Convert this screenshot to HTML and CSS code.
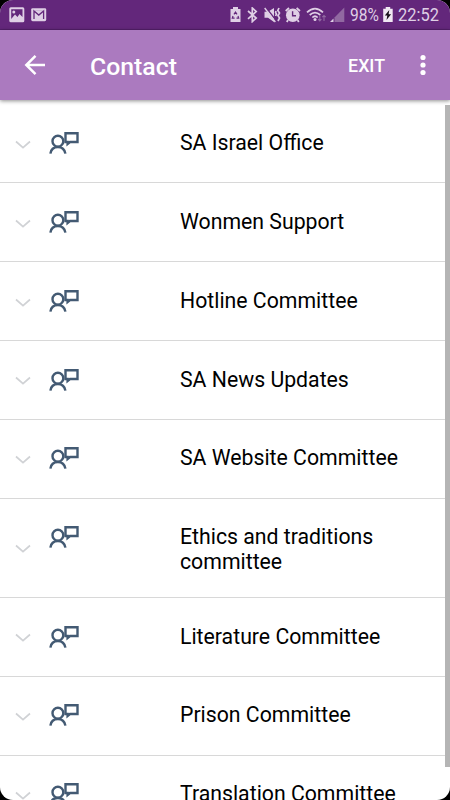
FILE: index.html
```html
<!DOCTYPE html>
<html lang="en">
<head>
<meta charset="utf-8">
<title>Contact</title>
<link rel="stylesheet" href="styles.css">
</head>
<body>
<svg class="symbols" width="0" height="0">
  <symbol id="chevron" viewBox="0 0 16 10"><path d="M1 1.5 8 7.7 15 1.5" fill="none" stroke="#d0d2d5" stroke-width="1.7"/></symbol>
  <symbol id="person" viewBox="0 0 30 24">
    <g fill="none" stroke="#435a73" stroke-width="2.4">
      <circle cx="8.9" cy="10.2" r="5.4"/>
      <path d="M1.4 22.6C2 18.2 4.7 16 8.9 16S15.6 18.2 16.4 22.6"/>
      <path d="M16.5 2.2H28.5V11H21L18.6 13V11H16.5Z"/>
    </g>
  </symbol>
</svg>
<div class="screen">
  <header class="status">
    <div class="notices">
      <svg width="16" height="16" viewBox="0 0 16 16"><rect x=".3" y=".3" width="15" height="15" rx="1.5" fill="#dfcfe5"/><path d="M2.2 2.2H13.5V10L10.5 7 8.5 10 6 7.5 2.2 12Z" fill="#63277b"/><circle cx="4.8" cy="5" r="1.5" fill="#dfcfe5"/></svg>
      <svg width="16" height="16" viewBox="0 0 16 16"><rect x=".2" y="1.2" width="15" height="13" rx="1.4" fill="#dfcfe5"/><path d="M3 12V4L7.8 8.1 12.6 4V12" fill="none" stroke="#63277b" stroke-width="1.3"/><path d="M3 3.6H12.6" stroke="#b99bc4" stroke-width=".5"/></svg>
    </div>
    <div class="indicators">
      <svg width="11" height="16" viewBox="0 0 11 16"><path d="M3 0H8V2H10.5V15H.5V2H3Z" fill="#dfcfe5"/><path d="M4 7.3 5.5 5 7 7.3M8 9 8.7 11.2H6.5M4.6 11.2H2.3L3 9" fill="none" stroke="#63277b" stroke-width="1.2"/></svg>
      <svg class="bluetooth" width="11" height="16" viewBox="0 0 11 16"><path d="M1 4 9.2 11 5.3 14.6V1L9.2 4.6 1 11.8" fill="none" stroke="#dfcfe5" stroke-width="1.7"/></svg>
      <svg class="mute" width="17" height="16" viewBox="0 0 17 16"><path d="M.5 4.8H4L10 1V15L4 10.8H.5Z" fill="#dfcfe5"/><path d="M2 .6 12.4 13.8" stroke="#63277b" stroke-width="1.5"/><path d="M.7 1 11.3 15" stroke="#dfcfe5" stroke-width="1.4"/><path d="M15 1 13.8 3.5 15.5 6 14 8.5 15.5 11 14 14M12 4 11.6 5.5 12.4 7 11.6 9" fill="none" stroke="#dfcfe5" stroke-width="1.7"/></svg>
      <svg class="alarm" width="16" height="16" viewBox="0 0 16 16"><circle cx="7.8" cy="8.2" r="6.8" fill="#dfcfe5"/><path d="M.7 4 4 1M11.6 1 15 4M3 13 1.8 15M12.6 13 13.8 15" stroke="#dfcfe5" stroke-width="1.8"/><path d="M7.6 4.3V8.8H11" fill="none" stroke="#63277b" stroke-width="1.4"/></svg>
      <svg class="wifi" width="21" height="16" viewBox="0 0 21 16"><g fill="none" stroke="#dfcfe5" stroke-width="1.7"><path d="M1 5.4Q9 -2.3 17 5.4M3.7 8Q9 3.2 14.3 8M6.3 10.5Q9 8 11.7 10.5"/></g><circle cx="9" cy="12.5" r="1.5" fill="#dfcfe5"/><path d="M13.8 8.5V14M12.2 12.2 13.8 14 15.4 12.2M18 14V8.5M16.3 10.2 18 8.5 19.7 10.2" fill="none" stroke="#9168a1" stroke-width="1.1"/></svg>
      <svg class="signal" width="15" height="16" viewBox="0 0 15 16"><path d="M14.3 .5V15H4.5V10.5Z" fill="#9168a1"/><path d="M0 15 3.5 11.5V15Z" fill="#dfcfe5"/></svg>
      <span class="percent">98%</span>
      <svg class="charging" width="10" height="16" viewBox="0 0 10 16"><path d="M2.7 0H7.2V1.7H9.7V15H.2V1.7H2.7Z" fill="#f0e8f3"/><path d="M6.3 3 1.8 8.5H4.3L3.5 13 8.1 7.2H5.6Z" fill="#171019"/></svg>
      <span class="clock">22:52</span>
    </div>
  </header>
  <nav class="toolbar">
    <svg class="back" width="22" height="22" viewBox="0 0 22 22"><path d="M21 11H2.5M11.5 1.8 2.3 11 11.5 20.2" fill="none" stroke="#fff" stroke-width="2.5"/></svg>
    <h1>Contact</h1>
    <span class="exit">EXIT</span>
    <svg class="more" width="6" height="22" viewBox="0 0 6 22"><g fill="#fff"><circle cx="3" cy="3.5" r="2.6"/><circle cx="3" cy="11" r="2.6"/><circle cx="3" cy="18.5" r="2.6"/></g></svg>
  </nav>
  <main class="list">
    <div class="row"><svg class="chevron"><use href="#chevron"/></svg><svg class="person"><use href="#person"/></svg><p>SA Israel Office</p></div>
    <div class="row"><svg class="chevron"><use href="#chevron"/></svg><svg class="person"><use href="#person"/></svg><p>Wonmen Support</p></div>
    <div class="row"><svg class="chevron"><use href="#chevron"/></svg><svg class="person"><use href="#person"/></svg><p>Hotline Committee</p></div>
    <div class="row"><svg class="chevron"><use href="#chevron"/></svg><svg class="person"><use href="#person"/></svg><p>SA News Updates</p></div>
    <div class="row"><svg class="chevron"><use href="#chevron"/></svg><svg class="person"><use href="#person"/></svg><p>SA Website Committee</p></div>
    <div class="row tall"><svg class="chevron"><use href="#chevron"/></svg><svg class="person"><use href="#person"/></svg><p>Ethics and traditions committee</p></div>
    <div class="row"><svg class="chevron"><use href="#chevron"/></svg><svg class="person"><use href="#person"/></svg><p>Literature Committee</p></div>
    <div class="row"><svg class="chevron"><use href="#chevron"/></svg><svg class="person"><use href="#person"/></svg><p>Prison Committee</p></div>
    <div class="row"><svg class="chevron"><use href="#chevron"/></svg><svg class="person"><use href="#person"/></svg><p>Translation Committee</p></div>
  </main>
  <div class="scrollbar"></div>
</div>
</body>
</html>
```
FILE: styles.css
```css
* { box-sizing: border-box; }
body { margin: 0; background: #000; font-family: Roboto, sans-serif; overflow: hidden; }
svg { display: block; flex: none; }
.symbols { position: absolute; }
.screen {
  position: relative;
  width: 450px;
  height: 800px;
  overflow: hidden;
  background: #fff;
  border-radius: 13px;
}
.status {
  display: flex;
  justify-content: space-between;
  height: 30px;
  padding: 7px 10px 0 9px;
  background: #63277b;
  border-bottom: 1px solid #55206c;
}
.notices { display: flex; gap: 6px; }
.indicators { display: flex; width: 210px; color: #dfcfe5; font-size: 18.5px; line-height: 17px; }
.bluetooth { margin-left: 6px; }
.mute { margin-left: 6px; }
.alarm { margin-left: 4px; }
.wifi { margin-left: 5px; }
.signal { margin-left: 3px; }
.percent { width: 30px; margin-left: 5px; transform: scaleX(.84); transform-origin: left; }
.charging { margin-left: 3px; }
.clock { margin-left: 5px; transform: scaleX(.89); transform-origin: left; }
.toolbar {
  position: relative;
  display: flex;
  align-items: center;
  height: 70px;
  padding: 0 24px 0 24px;
  background: #ab7abf;
  color: #fff;
  box-shadow: 0 1px 4px rgba(0, 0, 0, .45);
}
.toolbar h1 { margin: 3px 0 0 44px; font-size: 24.8px; font-weight: 500; }
.exit { margin-left: auto; font-size: 17.8px; font-weight: 500; }
.more { margin-left: 35px; }
.list { height: 700px; padding-top: 4.7px; overflow: hidden; }
.row {
  display: flex;
  align-items: center;
  height: 78.8px;
  padding-left: 15px;
  border-bottom: 1px solid #d8d8d8;
}
.tall { height: 99.4px; }
.chevron { width: 16px; height: 10px; margin-top: 3px; }
.person { align-self: flex-start; width: 30px; height: 24px; margin: 26.5px 0 0 18px; }
.row p { align-self: flex-start; width: 250px; margin: 26.5px 0 0 101px; font-size: 21.25px; line-height: 24.5px; }
.scrollbar {
  position: absolute;
  top: 105px;
  right: 0;
  width: 5px;
  height: 662px;
  background: #b5b5b5;
}
```
